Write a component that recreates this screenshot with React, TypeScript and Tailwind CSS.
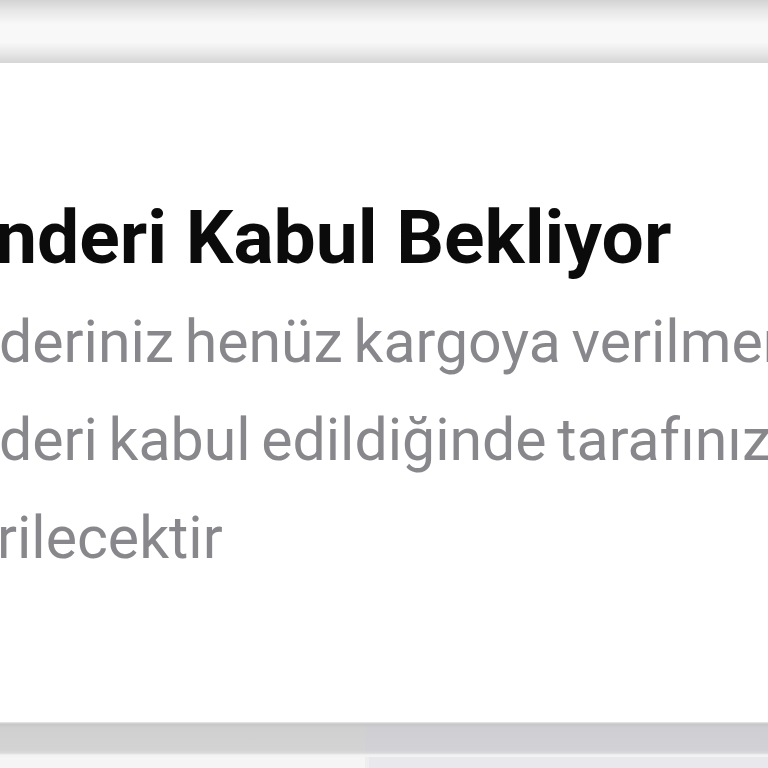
const font = { fontFamily: 'Roboto, "Noto Sans", sans-serif' };

export default function App() {
  return (
    <div className="w-[768px] h-[768px] overflow-hidden flex flex-col bg-white" style={font}>
      {/* toolbar strip above the card */}
      <div className="h-[63px] shrink-0 bg-[linear-gradient(to_bottom,#d3d3d3_0px,#e6e6e6_10px,#f8f8f8_24px,#f8f8f8_42px,#e6e6e6_54px,#dadada_60px,#d6d6d6_63px)]" />

      {/* status card */}
      <div className="h-[659px] shrink-0 bg-white pt-[137px] overflow-hidden">
        <h1 className="text-[75px] leading-[75px] font-bold text-[#0b0b0b] whitespace-nowrap -ml-[5px]">
          nderi Kabul Bekliyor
        </h1>
        <div className="mt-[18px] text-[59px] leading-[98px] text-[#88888c] whitespace-nowrap [word-spacing:-4px]">
          <p className="-ml-[1px]">deriniz henüz kargoya verilmemiştir.</p>
          <p className="-ml-[1px]">deri kabul edildiğinde tarafınıza bilgi</p>
          <p className="-ml-[3px]">rilecektir</p>
        </div>
      </div>

      {/* bottom bar */}
      <div className="h-[35px] shrink-0 flex">
        <div className="w-[365px] bg-[linear-gradient(to_bottom,#ececec_0px,#c6c6c6_2px,#d0d0d0_6px,#d3d3d3_28px,#dadada_31px,#f3f3f3_33px,#f3f3f3_35px)]" />
        <div className="flex-1 bg-[linear-gradient(to_bottom,#ececec_0px,#c6c6ca_2px,#cfcfd3_6px,#d1d1d6_28px,#d9d9dd_31px,#f3f3f3_33px,#f3f3f3_35px)]" />
      </div>
      <div className="flex-1 flex">
        <div className="w-[365px] bg-[#f5f5f5]" />
        <div className="w-[4px] bg-[#eeeeee]" />
        <div className="flex-1 bg-[#e8e8ed]" />
      </div>
    </div>
  );
}
